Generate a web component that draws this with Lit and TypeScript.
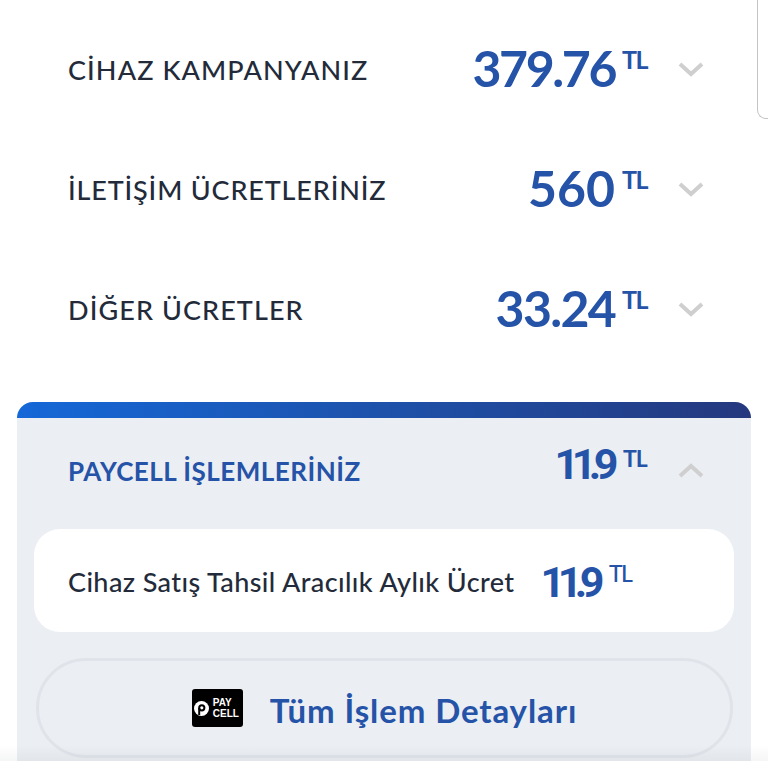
import { LitElement, html, css } from "lit";
import { customElement } from "lit/decorators.js";

const chevron = (up = false) => html`<svg class="chev" width="28" height="18" viewBox="0 0 28 18" fill="none"><path d=${up ? "M3 14 L14 4 L25 14" : "M3 4 L14 14 L25 4"} stroke="#cfcfcf" stroke-width="4" stroke-linejoin="miter"/></svg>`;

@customElement("app-root")
export class AppRoot extends LitElement {
  static styles = css`
    :host { display: block; width: 768px; height: 768px; overflow: hidden; position: relative; background: #fff; font-family: Lato, "Noto Sans", sans-serif; color: #232b3a; }
    .page { display: flex; flex-direction: column; padding-top: 9px; }
    .row { display: flex; align-items: center; height: 120px; padding: 0 63px 0 68px; }
    .label { flex: 1; font-size: 27px; font-weight: 500; white-space: nowrap; }
    .amount { display: flex; align-items: flex-start; color: #2553a8; font-weight: 700; margin-bottom: 2px; }
    .num { font-size: 50px; line-height: 54px; }
    .tl { font-size: 25px; line-height: 26px; font-weight: 700; margin: 5px 0 0 7px; letter-spacing: -1.5px; width: 25px; }
    .chev { margin-left: 30px; display: block; }
    .card { margin: 33px 17px 0; height: 359px; background: #ebeef2; border-radius: 16px 16px 0 0; display: flex; flex-direction: column; overflow: hidden; }
    .bar { height: 16px; flex: none; background: linear-gradient(90deg, #1568d8 0%, #1e4fa6 55%, #25387e 100%); }
    .head { display: flex; align-items: center; height: 106px; padding: 0 46px 10px 51px; flex: none; }
    .head .label { color: #2553a8; font-size: 26px; font-weight: 700; letter-spacing: 0.5px; }
    .head .amount { margin-bottom: 14px; }
    .head .num, .item .num { font-family: Roboto, sans-serif; font-size: 43px; line-height: 46px; letter-spacing: -7.5px; }
    .head .tl { font-size: 23px; line-height: 22px; letter-spacing: -1px; margin: 6px 0 0 12px; width: 24px; }
    .item { flex: none; margin: -5px 17px 0; height: 103px; background: #fff; border-radius: 26px; display: flex; align-items: center; padding: 5px 0 0 34px; box-sizing: border-box; }
    .item .text { font-size: 27px; font-weight: 500; white-space: nowrap; letter-spacing: 0.4px; margin-bottom: 3px; }
    .item .amount { margin-left: 26px; }
    .item .tl { font-size: 23px; line-height: 22px; letter-spacing: -1.5px; margin: 3px 0 0 12px; font-weight: 500; width: 22px; }
    .btn { flex: none; margin: 26px 18px 0 19px; height: 100px; box-sizing: border-box; border: 3px solid #e0e4ea; border-radius: 50px; display: flex; align-items: center; justify-content: center; gap: 27px; }
    .logo { width: 51px; height: 38px; box-sizing: border-box; padding-left: 2px; background: #000; border-radius: 3px; display: flex; align-items: center; gap: 4px; color: #fff; flex: none; }
    .logo .t { font-size: 10px; line-height: 11.5px; font-weight: 700; font-family: "Liberation Sans", sans-serif; }
    .btn .cta { color: #2553a8; font-size: 33px; font-weight: 700; letter-spacing: 0.9px; white-space: nowrap; padding-top: 3px; }
    .scroll { position: absolute; right: 0; top: -4px; width: 11px; height: 123px; box-sizing: border-box; border: 1.5px solid #c4c4c4; border-right: none; border-radius: 0 0 0 9px; }
    .fade { position: absolute; left: 0; right: 0; bottom: 7px; height: 16px; background: linear-gradient(180deg, rgba(60,70,90,0) 0%, rgba(60,70,90,0.05) 100%); }
  `;

  private amount(n: string, tracking = 0) {
    return html`<div class="amount"><span class="num" style="letter-spacing:${tracking}px">${n}</span><span class="tl">TL</span></div>`;
  }

  private small(n: string) {
    return html`<div class="amount"><span class="num">${n}</span><span class="tl">TL</span></div>`;
  }

  private rowLabel(text: string, tracking: number) {
    return html`<div class="label" style="letter-spacing:${tracking}px">${text}</div>`;
  }

  render() {
    return html`
      <div class="page">
        <div class="row">${this.rowLabel("CİHAZ KAMPANYANIZ", 1.1)}${this.amount("379.76", -2.4)}${chevron()}</div>
        <div class="row">${this.rowLabel("İLETİŞİM ÜCRETLERİNİZ", 0.85)}${this.amount("560", 0)}${chevron()}</div>
        <div class="row">${this.rowLabel("DİĞER ÜCRETLER", 1.1)}${this.amount("33.24", -1.7)}${chevron()}</div>
        <div class="card">
          <div class="bar"></div>
          <div class="head"><div class="label">PAYCELL İŞLEMLERİNİZ</div>${this.small("11.9")}${chevron(true)}</div>
          <div class="item"><span class="text">Cihaz Satış Tahsil Aracılık Aylık Ücret</span>${this.small("11.9")}</div>
          <div class="btn">
            <div class="logo">
              <svg width="15" height="15" viewBox="0 0 15 15"><circle cx="7.5" cy="7.5" r="7.5" fill="#fff"/><circle cx="7.8" cy="6.8" r="2.6" fill="none" stroke="#000" stroke-width="2"/><path d="M5.2 7 V14" stroke="#000" stroke-width="2"/></svg>
              <div class="t">PAY<br />CELL</div>
            </div>
            <span class="cta">Tüm İşlem Detayları</span>
          </div>
        </div>
      </div>
      <div class="scroll"></div>
      <div class="fade"></div>
    `;
  }
}
